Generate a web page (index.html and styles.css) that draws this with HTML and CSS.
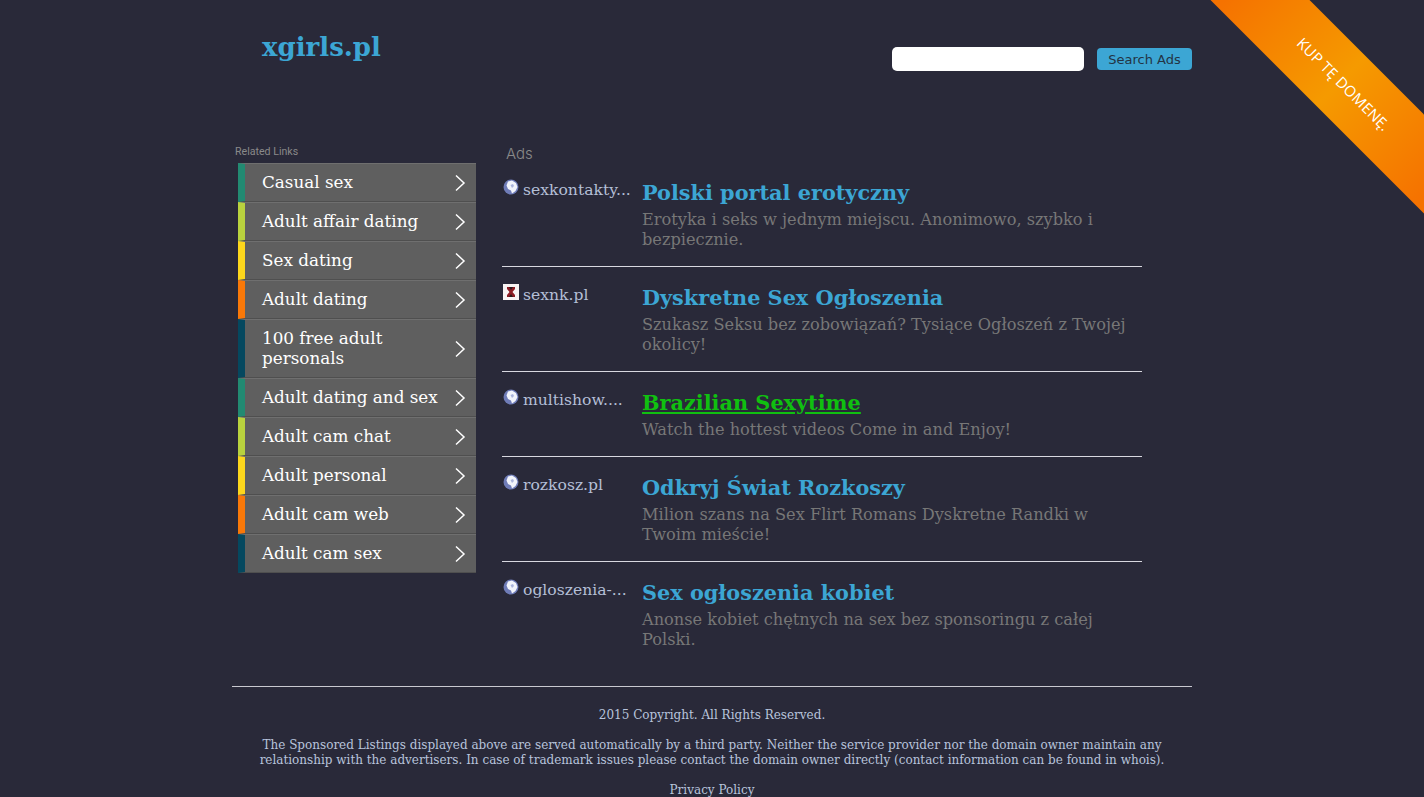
FILE: index.html
```html
<!DOCTYPE html>
<html lang="pl">

<head>
    <meta charset="UTF-8">
    <meta name="viewport" content="width=device-width, initial-scale=1.0">
    <title>xgirls.pl</title>
    <link rel="stylesheet" href="styles.css">
</head>

<body>
    <a class="ribbon" href="#"><span>KUP TĘ DOMENĘ.</span></a>

    <div id="wrap">
        <div id="header">
            <h1 class="logo">xgirls.pl</h1>
            <form class="search">
                <input class="search-input" type="text">
                <button class="search-btn" type="button">Search Ads</button>
            </form>
        </div>

        <div id="main">
            <div id="side">
                <div class="side-title">Related Links</div>
                <ul class="links">
                    <li class="link c1"><a href="#">Casual sex</a><svg class="arrow" viewBox="0 0 12 18"><path d="M2 1.5 10 9l-8 7.5"/></svg></li>
                    <li class="link c2"><a href="#">Adult affair dating</a><svg class="arrow" viewBox="0 0 12 18"><path d="M2 1.5 10 9l-8 7.5"/></svg></li>
                    <li class="link c3"><a href="#">Sex dating</a><svg class="arrow" viewBox="0 0 12 18"><path d="M2 1.5 10 9l-8 7.5"/></svg></li>
                    <li class="link c4"><a href="#">Adult dating</a><svg class="arrow" viewBox="0 0 12 18"><path d="M2 1.5 10 9l-8 7.5"/></svg></li>
                    <li class="link c5"><a href="#">100 free adult personals</a><svg class="arrow" viewBox="0 0 12 18"><path d="M2 1.5 10 9l-8 7.5"/></svg></li>
                    <li class="link c1"><a href="#">Adult dating and sex</a><svg class="arrow" viewBox="0 0 12 18"><path d="M2 1.5 10 9l-8 7.5"/></svg></li>
                    <li class="link c2"><a href="#">Adult cam chat</a><svg class="arrow" viewBox="0 0 12 18"><path d="M2 1.5 10 9l-8 7.5"/></svg></li>
                    <li class="link c3"><a href="#">Adult personal</a><svg class="arrow" viewBox="0 0 12 18"><path d="M2 1.5 10 9l-8 7.5"/></svg></li>
                    <li class="link c4"><a href="#">Adult cam web</a><svg class="arrow" viewBox="0 0 12 18"><path d="M2 1.5 10 9l-8 7.5"/></svg></li>
                    <li class="link c5"><a href="#">Adult cam sex</a><svg class="arrow" viewBox="0 0 12 18"><path d="M2 1.5 10 9l-8 7.5"/></svg></li>
                </ul>
            </div>

            <div id="ads">
                <div class="ads-title">Ads</div>

                <div class="ad">
                    <div class="ad-site">
                        <svg class="globe" viewBox="0 0 16 16"><circle cx="8" cy="8" r="7.5" fill="#6f7cb8"/><path d="M5 2.5 9 1.5l4 2.5 1.5 4-2 4-3.5 2.5-1-3-3-1.500-1.500-3.500z" fill="#f2f4fb"/><path d="M7.500 6 10 5l1 2-2 2z" fill="#aab4dc"/></svg>
                        <span>sexkontakty...</span>
                    </div>
                    <div class="ad-body">
                        <h2 class="ad-title"><a href="#">Polski portal erotyczny</a></h2>
                        <p class="ad-text">Erotyka i seks w jednym miejscu. Anonimowo, szybko i bezpiecznie.</p>
                    </div>
                </div>

                <div class="ad">
                    <div class="ad-site">
                        <svg class="globe" viewBox="0 0 16 16"><rect width="16" height="16" fill="#f8f4f4"/><path d="M4 3h8v2l-2.500 3 2.500 3v2H4v-2l2.500-3L4 5z" fill="#8c1c24"/><path d="M6 3h4L8 6zM6 13l2-3 2 3z" fill="#2a1a1c"/></svg>
                        <span>sexnk.pl</span>
                    </div>
                    <div class="ad-body">
                        <h2 class="ad-title"><a href="#">Dyskretne Sex Ogłoszenia</a></h2>
                        <p class="ad-text">Szukasz Seksu bez zobowiązań? Tysiące Ogłoszeń z Twojej okolicy!</p>
                    </div>
                </div>

                <div class="ad">
                    <div class="ad-site">
                        <svg class="globe" viewBox="0 0 16 16"><circle cx="8" cy="8" r="7.5" fill="#6f7cb8"/><path d="M5 2.5 9 1.5l4 2.5 1.5 4-2 4-3.5 2.5-1-3-3-1.500-1.500-3.500z" fill="#f2f4fb"/><path d="M7.500 6 10 5l1 2-2 2z" fill="#aab4dc"/></svg>
                        <span>multishow....</span>
                    </div>
                    <div class="ad-body">
                        <h2 class="ad-title hover"><a href="#">Brazilian Sexytime</a></h2>
                        <p class="ad-text">Watch the hottest videos Come in and Enjoy!</p>
                    </div>
                </div>

                <div class="ad">
                    <div class="ad-site">
                        <svg class="globe" viewBox="0 0 16 16"><circle cx="8" cy="8" r="7.5" fill="#6f7cb8"/><path d="M5 2.5 9 1.5l4 2.5 1.5 4-2 4-3.5 2.5-1-3-3-1.500-1.500-3.500z" fill="#f2f4fb"/><path d="M7.500 6 10 5l1 2-2 2z" fill="#aab4dc"/></svg>
                        <span>rozkosz.pl</span>
                    </div>
                    <div class="ad-body">
                        <h2 class="ad-title"><a href="#">Odkryj Świat Rozkoszy</a></h2>
                        <p class="ad-text">Milion szans na Sex Flirt Romans Dyskretne Randki w Twoim mieście!</p>
                    </div>
                </div>

                <div class="ad">
                    <div class="ad-site">
                        <svg class="globe" viewBox="0 0 16 16"><circle cx="8" cy="8" r="7.5" fill="#6f7cb8"/><path d="M5 2.5 9 1.5l4 2.5 1.5 4-2 4-3.5 2.5-1-3-3-1.500-1.500-3.500z" fill="#f2f4fb"/><path d="M7.500 6 10 5l1 2-2 2z" fill="#aab4dc"/></svg>
                        <span>ogloszenia-...</span>
                    </div>
                    <div class="ad-body">
                        <h2 class="ad-title"><a href="#">Sex ogłoszenia kobiet</a></h2>
                        <p class="ad-text">Anonse kobiet chętnych na sex bez sponsoringu z całej Polski.</p>
                    </div>
                </div>
            </div>
        </div>

        <div id="footer">
            <p>2015 Copyright. All Rights Reserved.</p>
            <p>The Sponsored Listings displayed above are served automatically by a third party. Neither the service provider nor the domain owner maintain any relationship with the advertisers. In case of trademark issues please contact the domain owner directly (contact information can be found in whois).</p>
            <p><a href="#">Privacy Policy</a></p>
        </div>
    </div>
</body>

</html>
```

FILE: styles.css
```css
html,
body {
    height: 797px;
    overflow: hidden;
}

body {
    margin: 0;
    background-color: #292939;
    font-family: "DejaVu Serif", "Liberation Serif", serif;
}

a {
    color: inherit;
    text-decoration: none;
}

#wrap {
    width: 960px;
    margin: 0 auto;
}

/* header */
#header {
    height: 145px;
    display: flex;
    justify-content: space-between;
    align-items: flex-start;
}

.logo {
    margin: 29px 0 0 30px;
    font-size: 26px;
    line-height: 36px;
    color: #3ca6d4;
}

.search {
    margin-top: 47px;
    display: flex;
    gap: 13px;
    align-items: center;
}

.search-input {
    width: 192px;
    height: 24px;
    box-sizing: border-box;
    border: 0;
    border-radius: 5px;
    background: #fff;
}

.search-btn {
    width: 95px;
    height: 22px;
    padding: 0;
    border: 0;
    border-radius: 4px;
    background: #3ca6d4;
    color: #233444;
    font-family: "DejaVu Sans", sans-serif;
    font-size: 13px;
}

/* ribbon */
.ribbon {
    position: absolute;
    top: 0;
    right: 0;
    width: 214px;
    height: 214px;
    overflow: hidden;
}

.ribbon span {
    position: absolute;
    top: 46px;
    left: -69px;
    width: 400px;
    height: 70px;
    box-sizing: border-box;
    padding-left: 8px;
    line-height: 70px;
    transform: rotate(45deg);
    text-align: center;
    font-family: "Open Sans", sans-serif;
    font-size: 15px;
    letter-spacing: 0.2px;
    color: #fff;
    background: linear-gradient(90deg, #f57200 15%, #f59a00 50%, #f57200 85%);
}

/* sidebar */
#main {
    display: flex;
}

#side {
    width: 244px;
    margin-right: 26px;
    box-sizing: border-box;
}

.side-title {
    margin-left: 3px;
    height: 18px;
    line-height: 14px;
    font-family: "Roboto", sans-serif;
    font-size: 10.6px;
    color: #8a8a8a;
}

.links {
    list-style-type: none;
    margin: 0 0 0 6px;
    padding: 0;
    width: 238px;
}

.link {
    display: flex;
    align-items: center;
    justify-content: space-between;
    box-sizing: border-box;
    min-height: 39px;
    padding: 8px 10px 9px 17px;
    border-left: 7px solid;
    border-top: 1px solid #6f6f6f;
    border-bottom: 1px solid #4f4f4f;
    background-color: #5f5f5f;
    color: #fff;
    font-size: 16.8px;
    line-height: 20px;
}

.link a {
    width: 178px;
}

.c1 { border-left-color: #228a72; }
.c2 { border-left-color: #b9d23e; }
.c3 { border-left-color: #fdd71c; }
.c4 { border-left-color: #f97808; }
.c5 { border-left-color: #05485f; }

.arrow {
    width: 12px;
    height: 18px;
    margin-top: 2px;
    fill: none;
    stroke: #fff;
    stroke-width: 1.5;
}

/* ads */
#ads {
    width: 640px;
}

.ads-title {
    margin-left: 4px;
    height: 17px;
    line-height: 18px;
    font-family: "Inter", sans-serif;
    font-weight: 300;
    font-size: 15px;
    color: #8a8a8a;
}

.ad {
    display: flex;
    padding: 17px 0 16px;
    border-bottom: 1px solid #d8d8e0;
}

.ad:last-child {
    border-bottom: 0;
}

.ad-site {
    width: 140px;
    display: flex;
    align-items: flex-start;
    gap: 4px;
    color: #b4bfd6;
    font-size: 15.6px;
    line-height: 22px;
}

.globe {
    width: 16px;
    height: 16px;
    margin-left: 1px;
    flex: none;
}

.ad-title {
    margin: 0;
    font-size: 20.8px;
    line-height: 28px;
    color: #3ca6d4;
}

.ad-title.hover {
    color: #10c010;
    text-decoration: underline;
}

.ad-text {
    margin: 3px 0 0;
    width: 490px;
    font-size: 16.2px;
    line-height: 20px;
    color: #777;
}

/* footer */
#footer {
    margin-top: 20px;
    padding-top: 21px;
    border-top: 1px solid #c8c8d0;
    text-align: center;
    color: #b8c4dc;
    font-size: 12px;
    line-height: 15px;
}

#footer p {
    margin: 0 0 15px;
    padding: 0 20px;
}
```
